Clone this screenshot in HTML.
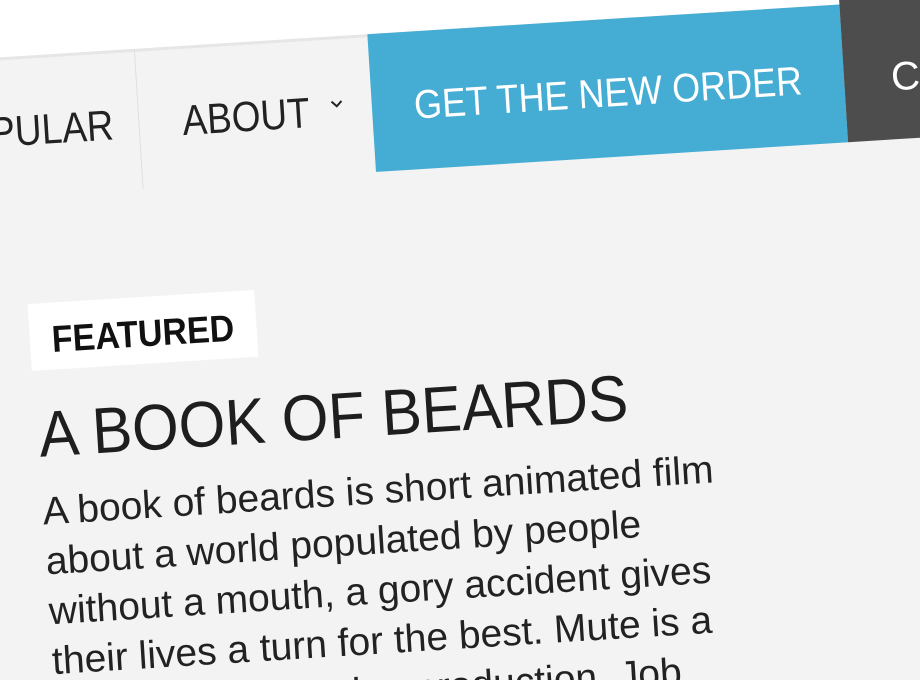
<!DOCTYPE html>
<html><head><meta charset="utf-8"><style>
html,body{margin:0;padding:0;width:920px;height:680px;overflow:hidden;background:#fff;}
#w{position:absolute;left:0;top:0;width:920px;height:680px;overflow:hidden;}
#r{position:absolute;left:0;top:0;width:1000px;height:700px;transform-origin:375px 172px;transform:rotate(-3.6deg);font-family:"Liberation Sans",sans-serif;color:#222;}
.bg{position:absolute;left:-100px;top:34px;width:1200px;height:900px;background:#f3f3f3;border-top:3px solid #e6e6e6;}
.t{position:absolute;white-space:nowrap;line-height:1;transform-origin:0 100%;}
.div{position:absolute;left:142px;top:36px;width:1px;height:138px;background:#e0e0e0;}
.blue{position:absolute;left:376px;top:34px;width:473px;height:138px;background:#45acd3;}
.dark{position:absolute;left:849px;top:20px;width:151px;height:152px;background:#4d4d4d;overflow:hidden;}
.feat{position:absolute;left:20px;top:282px;width:227px;height:67px;background:#fff;}
</style></head><body>
<div id="w">
<div id="r">
<div class="bg"></div>
<div class="div"></div>
<div class="t" style="left:-60px;top:93px;font-size:37px;text-align:right;width:158px;transform:scaleY(1.15);">POPULAR</div>
<div class="t" style="left:186px;top:93px;font-size:37px;transform:scaleY(1.15);">ABOUT</div>
<svg style="position:absolute;left:334px;top:97px" width="14" height="10" viewBox="0 0 14 10"><path d="M2 2 L7 7 L12 2" fill="none" stroke="#222" stroke-width="2"/></svg>
<div class="blue"></div>
<div class="t" style="left:376px;top:92px;width:473px;text-align:center;font-size:36px;color:#fff;transform:scaleY(1.12);">GET THE NEW ORDER</div>
<div class="dark"><div class="t" style="left:47px;top:70px;font-size:40px;color:#fff;">CONTACT</div></div>
<div class="feat"></div>
<div class="t" style="left:42px;top:304px;font-size:34px;font-weight:bold;color:#111;transform:scaleY(1.1);">FEATURED</div>
<div class="t" style="left:23px;top:386px;font-size:60px;color:#1e1e1e;transform:scaleY(1.08);">A BOOK OF BEARDS</div>
<div class="t" style="left:22px;top:466px;font-size:39px;line-height:50px;color:#222;">A book of beards is short animated film<br>about a world populated by people<br>without a mouth, a gory accident gives<br>their lives a turn for the best. Mute is a<br>student's graduation production. Job,</div>
</div>
</div>
</body></html>
